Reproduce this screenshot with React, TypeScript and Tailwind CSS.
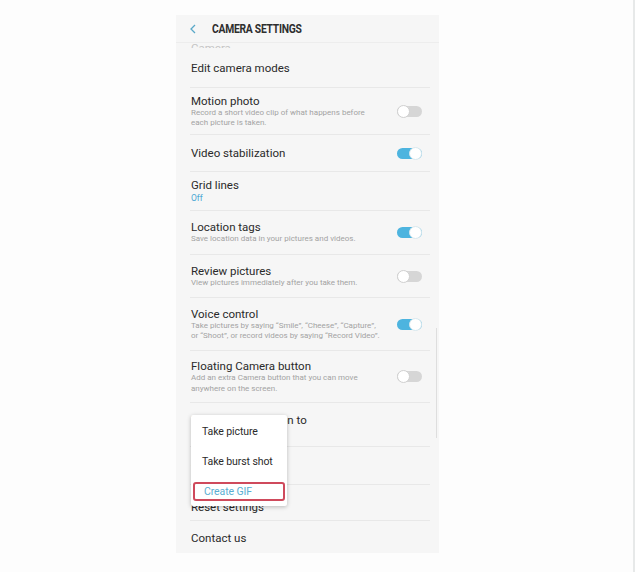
import React from "react";

type Row = {
  title: string;
  desc?: string[];
  sub?: string;
  toggle?: boolean;
  h: string;
};

const ROWS: Row[] = [
  { title: "Edit camera modes", h: "h-[40px]" },
  {
    title: "Motion photo",
    desc: ["Record a short video clip of what happens before", "each picture is taken."],
    toggle: false,
    h: "h-[47px]",
  },
  { title: "Video stabilization", toggle: true, h: "h-[37px]" },
  { title: "Grid lines", sub: "Off", h: "h-[39px]" },
  {
    title: "Location tags",
    desc: ["Save location data in your pictures and videos."],
    toggle: true,
    h: "h-[44px]",
  },
  {
    title: "Review pictures",
    desc: ["View pictures immediately after you take them."],
    toggle: false,
    h: "h-[43px]",
  },
  {
    title: "Voice control",
    desc: [
      "Take pictures by saying \u201cSmile\u201d, \u201cCheese\u201d, \u201cCapture\u201d,",
      "or \u201cShoot\u201d, or record videos by saying \u201cRecord Video\u201d.",
    ],
    toggle: true,
    h: "h-[53px]",
  },
  {
    title: "Floating Camera button",
    desc: ["Add an extra Camera button that you can move", "anywhere on the screen."],
    toggle: false,
    h: "h-[52px]",
  },
  { title: "Hold Camera button to", sub: "Create GIF", h: "h-[44px] pt-[2px]" },
  { title: "Storage location", h: "h-[38px] pb-[6px]" },
  { title: "Reset settings", h: "h-[36px] pt-[8px]" },
  { title: "Contact us", h: "h-[32px] pt-[2px]" },
];

function Toggle({ on }: { on: boolean }) {
  return (
    <div className="relative w-[25px] h-[13px] shrink-0">
      <div
        className={
          on
            ? "absolute left-0 top-[1px] w-[25px] h-[11px] rounded-full bg-[#4db4df]"
            : "absolute left-0 top-[1px] w-[25px] h-[11px] rounded-full bg-[#d6d6d6]"
        }
      />
      <div
        className={
          on
            ? "absolute right-0 top-0 w-[13px] h-[13px] rounded-full bg-white border border-[#d8e8ee]"
            : "absolute left-0 top-0 w-[13px] h-[13px] rounded-full bg-white border border-[#d0d0d0]"
        }
      />
    </div>
  );
}

function SettingRow({ row, last }: { row: Row; last: boolean }) {
  return (
    <div
      className={`${row.h} ml-[14px] mr-[9px] pl-[1px] pr-[8px] flex items-center justify-between ${
        last ? "" : "border-b border-[#e8e8e8]"
      }`}
    >
      <div className="flex flex-col">
        <div className="text-[11.5px] leading-[14px] text-[#2a2a2a]">{row.title}</div>
        {row.sub && <div className="text-[8.5px] leading-[12px] text-[#4ba7d3]">{row.sub}</div>}
        {row.desc?.map((d) => (
          <div key={d} className="text-[8px] leading-[10.5px] text-[#a3a3a3]">
            {d}
          </div>
        ))}
      </div>
      {row.toggle !== undefined && <Toggle on={row.toggle} />}
    </div>
  );
}

export default function App() {
  return (
    <div
      className="w-[635px] h-[572px] bg-[#fdfdfd] border-r-2 border-[#e7e9e9] pt-[15px] pl-[176px]"
      style={{ fontFamily: "Roboto, 'Liberation Sans', sans-serif" }}
    >
      <div className="relative w-[263px] h-[538px] bg-[#f6f6f6] flex flex-col overflow-hidden">
        {/* header */}
        <div className="h-[28px] shrink-0 flex items-center border-b border-[#ededed]">
          <svg width="8" height="10" viewBox="0 0 8 10" className="ml-[13px] mt-[1px]">
            <polyline points="6,1 2,5 6,9" fill="none" stroke="#5aa8c8" strokeWidth="1.3" />
          </svg>
          <div className="ml-[15px] text-[12px] font-bold text-[#2e2e2e] tracking-[-0.3px] origin-left scale-x-[0.86] mt-[1px]">
            CAMERA SETTINGS
          </div>
        </div>

        {/* list */}
        <div className="flex flex-col">
          <div className="h-[5px] ml-[15px] overflow-hidden flex items-end">
            <div className="text-[11.5px] leading-[14px] text-[#c4c4c4] mb-[-7px]">Camera</div>
          </div>
          {ROWS.map((r, i) => (
            <SettingRow key={r.title} row={r} last={i === ROWS.length - 1} />
          ))}
        </div>

        {/* scrollbar */}
        <div className="absolute left-[260px] top-[313px] w-[1px] h-[110px] bg-[#dedede]" />

        {/* popup menu */}
        <div className="absolute left-[15px] top-[400px] w-[96px] h-[91px] bg-white rounded-[2px] shadow-[0_1px_4px_rgba(0,0,0,0.25)] flex flex-col pt-[2px]">
          <div className="h-[30px] pl-[11px] flex items-center text-[10.5px] tracking-[-0.1px] text-[#2a2a2a]">
            Take picture
          </div>
          <div className="h-[30px] pl-[11px] flex items-center text-[10.5px] tracking-[-0.1px] text-[#2a2a2a]">
            Take burst shot
          </div>
          <div className="mx-[2px] mt-[5px] h-[19px] pl-[9px] flex items-center text-[10.5px] tracking-[-0.1px] text-[#5aaed2] border-2 border-[#cf4a5c] rounded-[3px]">
            Create GIF
          </div>
        </div>
      </div>
    </div>
  );
}
